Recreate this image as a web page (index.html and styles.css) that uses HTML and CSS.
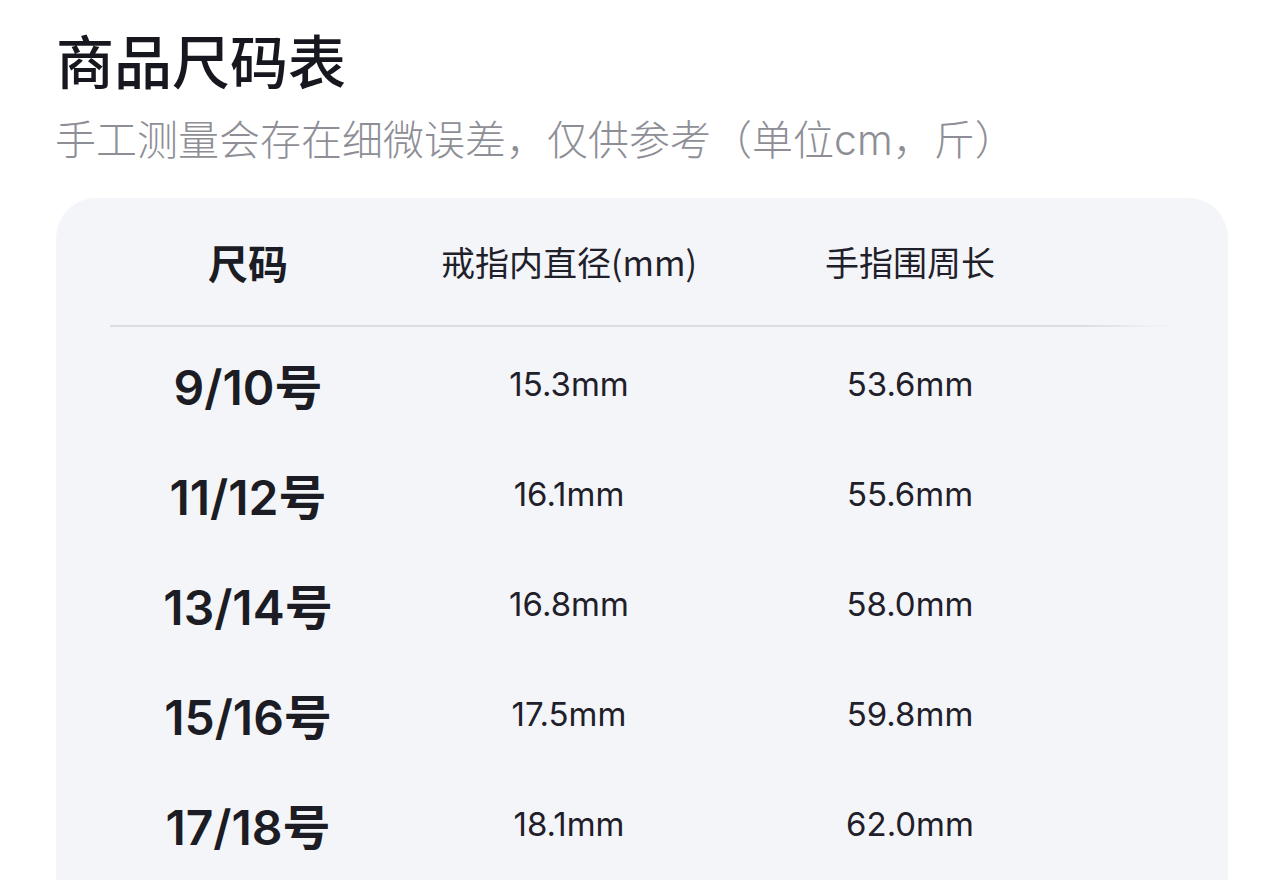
FILE: index.html
```html
<!DOCTYPE html>
<html lang="zh">
<head>
<meta charset="utf-8">
<link rel="stylesheet" href="styles.css">
</head>
<body>
<div class="page">
  <h1 class="title">商品尺码表</h1>
  <p class="subtitle">手工测量会存在细微误差，仅供参考（单位cm，斤）</p>
  <div class="card">
    <div class="row head">
      <div class="cell size">尺码</div>
      <div class="cell">戒指内直径(mm)</div>
      <div class="cell">手指围周长</div>
      <div class="cell"></div>
    </div>
    <div class="divider"></div>
    <div class="row">
      <div class="cell size">9/10号</div>
      <div class="cell">15.3mm</div>
      <div class="cell">53.6mm</div>
      <div class="cell"></div>
    </div>
    <div class="row">
      <div class="cell size">11/12号</div>
      <div class="cell">16.1mm</div>
      <div class="cell">55.6mm</div>
      <div class="cell"></div>
    </div>
    <div class="row">
      <div class="cell size">13/14号</div>
      <div class="cell">16.8mm</div>
      <div class="cell">58.0mm</div>
      <div class="cell"></div>
    </div>
    <div class="row">
      <div class="cell size">15/16号</div>
      <div class="cell">17.5mm</div>
      <div class="cell">59.8mm</div>
      <div class="cell"></div>
    </div>
    <div class="row">
      <div class="cell size">17/18号</div>
      <div class="cell">18.1mm</div>
      <div class="cell">62.0mm</div>
      <div class="cell"></div>
    </div>
    <div class="fade"></div>
  </div>
</div>
</body>
</html>
```

FILE: styles.css
```css
html, body {
  margin: 0;
  padding: 0;
  background: #ffffff;
  overflow: hidden;
}
body {
  font-family: Inter, "Noto Sans CJK SC", sans-serif;
  color: #1b1c24;
}
.page {
  padding: 22px 56px 0 56px;
}
.title {
  margin: 0;
  font-size: 58px;
  line-height: 74px;
  font-weight: 500;
  color: #16171f;
  font-family: "Noto Sans CJK SC", sans-serif;
}
.subtitle {
  margin: 16px 0 0 -1px;
  font-size: 41px;
  line-height: 56px;
  font-weight: 300;
  color: #8e8f96;
  font-family: Inter, "Noto Sans CJK SC", sans-serif;
}
.card {
  position: relative;
  margin-top: 30px;
  background: #f4f5f9;
  border-radius: 40px 40px 0 0;
  padding: 0 60px 0 54px;
  height: 682px;
  overflow: hidden;
}
.row {
  display: grid;
  grid-template-columns: 276px 366px 316px 1fr;
  height: 110px;
  align-items: center;
}
.row.head {
  height: 127px;
}
.cell {
  text-align: center;
  font-size: 33px;
  font-weight: 400;
  color: #1f2029;
  white-space: nowrap;
}
.cell.size {
  font-size: 48px;
  font-weight: 600;
  color: #1b1c24;
}
.head .cell {
  font-size: 34px;
  font-family: "Noto Sans CJK SC", sans-serif;
}
.head .cell.size {
  font-size: 40px;
  font-weight: 700;
}
.divider {
  height: 2px;
  margin-bottom: 2px;
  background: linear-gradient(to right, #dcdde2 0%, #dcdde2 90%, rgba(220,221,226,0) 100%);
  margin-right: -20px;
}
.fade {
  position: absolute;
  top: 0;
  right: 0;
  width: 110px;
  height: 100%;
  background: linear-gradient(to right, rgba(244,245,249,0), #f4f5f9 70%);
}
```
